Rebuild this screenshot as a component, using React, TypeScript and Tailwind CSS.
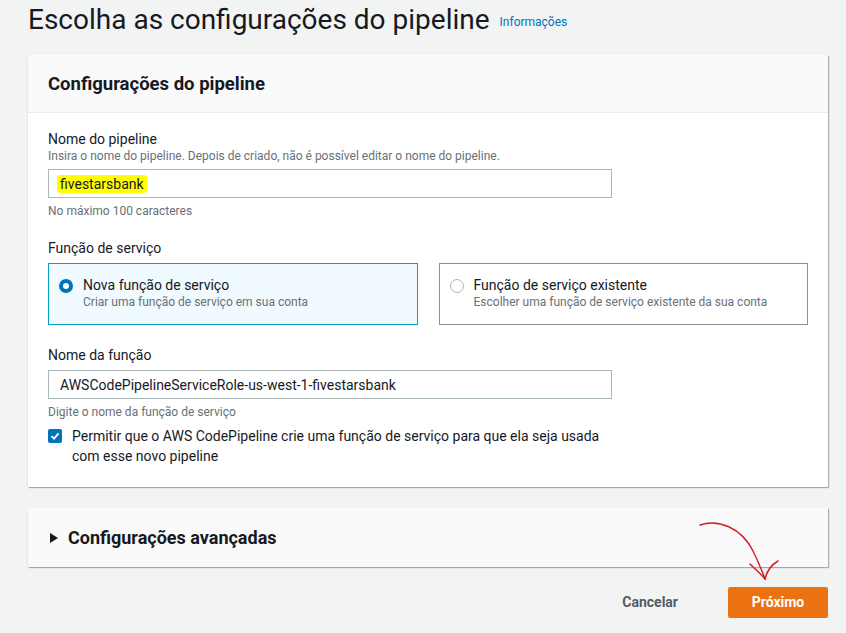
import React from "react";

const font = { fontFamily: "Roboto, 'Liberation Sans', sans-serif" };

function Radio({ checked }: { checked: boolean }) {
  return checked ? (
    <span className="mt-[3px] flex h-[14px] w-[14px] shrink-0 items-center justify-center rounded-full bg-[#0073bb]">
      <span className="h-[6px] w-[6px] rounded-full bg-white" />
    </span>
  ) : (
    <span className="mt-[3px] h-[14px] w-[14px] shrink-0 rounded-full border border-[#aab7b8] bg-white" />
  );
}

export default function App() {
  return (
    <div className="min-h-[633px] w-[846px] bg-[#f2f3f3] text-[#16191f]" style={font}>
      <div className="flex items-end px-[28px] pt-[2px]">
        <h1 className="text-[28px] leading-[36px] font-normal">Escolha as configurações do pipeline</h1>
        <a className="mb-[7px] ml-[10px] text-[12px] text-[#0073bb]">Informações</a>
      </div>

      <div className="mx-[28px] mt-[17px] w-[800px] bg-white shadow-[1px_1px_1px_0_rgba(0,22,40,0.3),-1px_1px_1px_-1px_rgba(0,22,40,0.3)]">
        <div className="flex h-[58px] items-center border-b border-[#eaeded] bg-[#fafafa] px-[20px]">
          <h2 className="text-[18.5px] font-bold leading-[22px]">Configurações do pipeline</h2>
        </div>
        <div className="px-[20px] pt-[17px] pb-[21px]">
          <div className="text-[14px] leading-[18px]">Nome do pipeline</div>
          <div className="text-[12px] leading-[16px] text-[#687078]">Insira o nome do pipeline. Depois de criado, não é possível editar o nome do pipeline.</div>
          <div className="mt-[5px] flex h-[29px] w-[564px] items-center border border-[#aab7b8] bg-white px-[8px]">
            <span className="rounded-[3px] bg-[#ffff00] px-[3px] text-[14px] leading-[18px]">fivestarsbank</span>
          </div>
          <div className="mt-[5px] text-[12px] leading-[16px] text-[#687078]">No máximo 100 caracteres</div>

          <div className="mt-[20px] text-[14px] leading-[18px]">Função de serviço</div>
          <div className="mt-[6px] grid grid-cols-2 gap-[21px]">
            <div className="flex h-[62px] gap-[10px] border border-[#00a1c9] bg-[#f1faff] px-[10px] pt-[12px]">
              <Radio checked />
              <div>
                <div className="text-[14px] leading-[18px]">Nova função de serviço</div>
                <div className="text-[12px] leading-[16px] text-[#687078]">Criar uma função de serviço em sua conta</div>
              </div>
            </div>
            <div className="flex h-[62px] gap-[10px] border border-[#879596] bg-white px-[10px] pt-[12px]">
              <Radio checked={false} />
              <div>
                <div className="text-[14px] leading-[18px]">Função de serviço existente</div>
                <div className="text-[12px] leading-[16px] text-[#687078]">Escolher uma função de serviço existente da sua conta</div>
              </div>
            </div>
          </div>

          <div className="mt-[21px] text-[14px] leading-[18px]">Nome da função</div>
          <div className="mt-[6px] flex h-[29px] w-[564px] items-center border border-[#aab7b8] bg-white px-[11px]">
            <span className="text-[14px] leading-[18px]">AWSCodePipelineServiceRole-us-west-1-fivestarsbank</span>
          </div>
          <div className="mt-[5px] text-[12px] leading-[16px] text-[#687078]">Digite o nome da função de serviço</div>
          <div className="mt-[6px] flex gap-[10px]">
            <span className="mt-[3px] flex h-[14px] w-[14px] shrink-0 items-center justify-center rounded-[2px] bg-[#0073bb]">
              <svg width="10" height="10" viewBox="0 0 10 10">
                <path d="M1.5 5.2 L4 7.6 L8.6 2.4" fill="none" stroke="white" strokeWidth="1.8" />
              </svg>
            </span>
            <div className="w-[545px] text-[14px] leading-[20px]">
              Permitir que o AWS CodePipeline crie uma função de serviço para que ela seja usada com esse novo pipeline
            </div>
          </div>
        </div>
      </div>

      <div className="mx-[28px] mt-[21px] flex h-[59px] w-[800px] items-center gap-[10px] bg-[#fafafa] px-[22px] shadow-[1px_1px_1px_0_rgba(0,22,40,0.3),-1px_1px_1px_-1px_rgba(0,22,40,0.3)]">
        <svg width="8" height="10" viewBox="0 0 8 10">
          <path d="M0 0 L8 5 L0 10 Z" fill="#16191f" />
        </svg>
        <h2 className="text-[18px] font-bold leading-[22px]">Configurações avançadas</h2>
      </div>

      <div className="relative mx-[28px] mt-[20px] flex w-[800px] items-center justify-end gap-[30px]">
        <button className="px-[20px] text-[14px] font-bold text-[#545b64]">Cancelar</button>
        <button className="h-[31px] w-[100px] rounded-[2px] bg-[#ec7211] text-[14px] font-bold text-white">Próximo</button>
        <svg className="absolute top-[-74px] left-[665px]" width="90" height="70" viewBox="0 0 90 70">
          <path d="M7 12 C 25 6, 48 14, 60 38 C 65 48, 69 58, 72 66" fill="none" stroke="#d21f26" strokeWidth="1.5" strokeLinecap="round" />
          <path d="M57 51 C 62 56, 67 60, 72 66 C 74 58, 78 52, 85 48" fill="none" stroke="#d21f26" strokeWidth="1.5" strokeLinecap="round" />
        </svg>
      </div>
    </div>
  );
}
